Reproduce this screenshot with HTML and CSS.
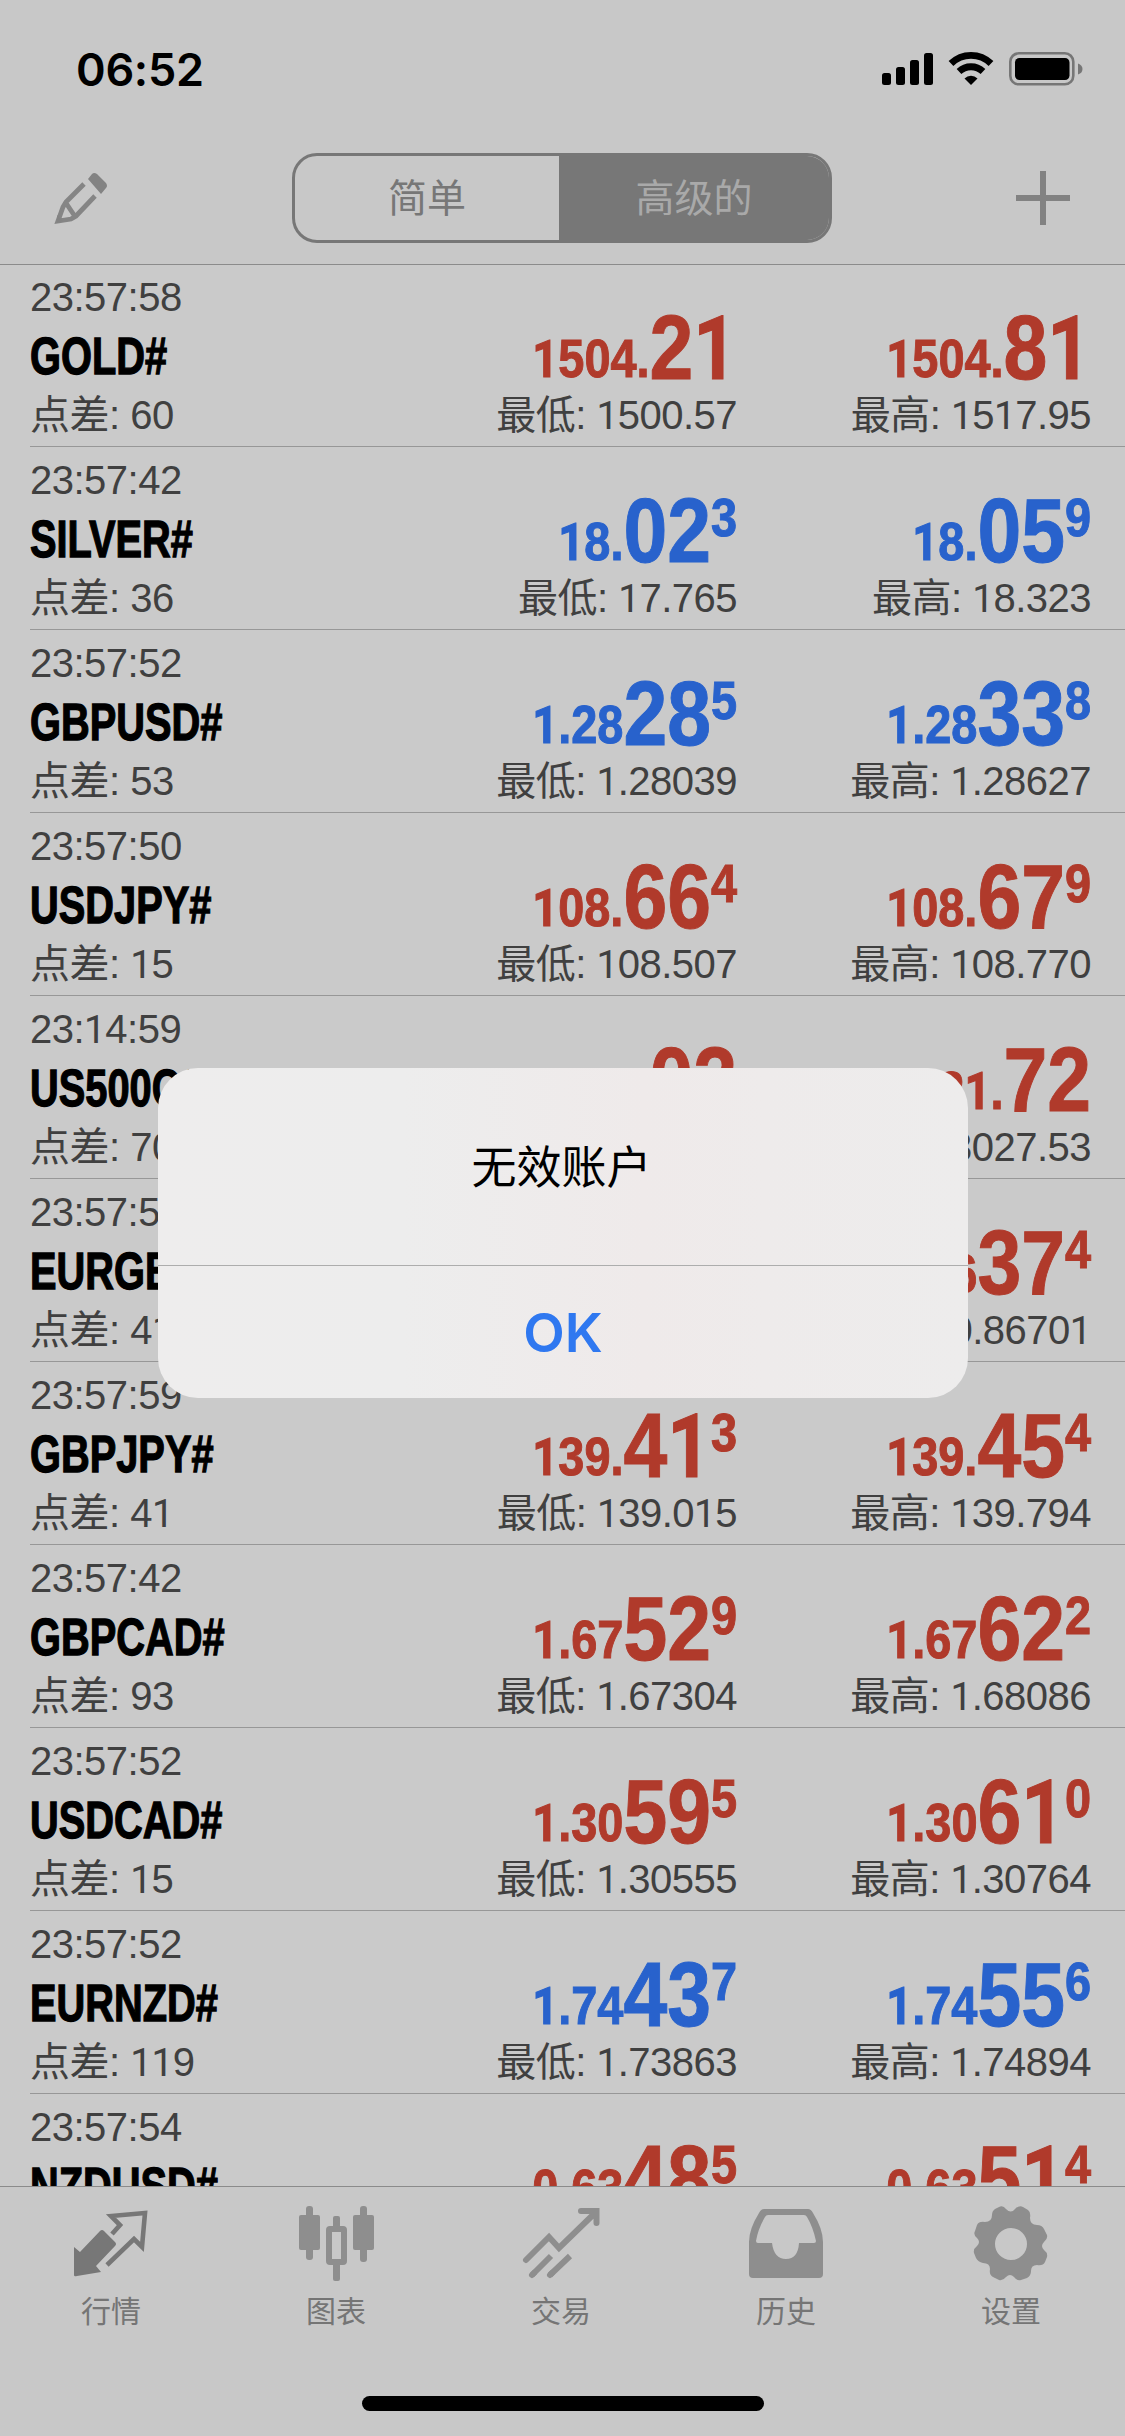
FILE: index.html
```
<!DOCTYPE html>
<html lang="zh-CN">
<head>
<meta charset="utf-8">
<title>行情</title>
<link rel="stylesheet" href="styles.css">
</head>
<body>
<div class="screen">
  <header class="top">
    <div class="status">
      <span class="clock">06:52</span>
      <svg class="status-icons" width="202" height="36" viewBox="0 0 202 36">
        <rect x="0" y="22" width="9" height="12" rx="2.5"/>
        <rect x="14" y="16" width="9" height="18" rx="2.5"/>
        <rect x="28" y="9" width="9" height="25" rx="2.5"/>
        <rect x="42" y="2" width="9" height="32" rx="2.5"/>
        <g fill="none" stroke="#000" stroke-width="6.8">
          <path d="M69 12.500 A28.500 28.500 0 0 1 109 12.500"/>
          <path d="M77 20.500 A17.500 17.500 0 0 1 101 20.500"/>
        </g>
        <path d="M89 34 L82.500 27.500 A9.200 9.200 0 0 1 95.500 27.500 Z"/>
        <rect x="128.300" y="2.300" width="63" height="31" rx="8.500" fill="none" stroke="#767676" stroke-width="2.600"/>
        <rect x="133" y="7" width="54.500" height="22" rx="4.500"/>
        <path d="M196 12.500 Q200.500 14 200.500 18 Q200.500 22 196 23.500 Z" fill="#767676"/>
      </svg>
    </div>
    <nav class="bar">
      <svg class="pencil" width="54" height="54" viewBox="0 0 54 54">
        <path d="M34 8 L38 3 Q40 1 43 3 L52 12 Q54 15 52 17 L47 23 Z" fill="#838383"/>
        <path d="M30 13 L12 31 L9 36 L4 50 L17 48 L22 45 L41 25 M12 32 L20 44" fill="none" stroke="#858585" stroke-width="4.800"/>
        <path d="M3 52 V44 L9 50 Z" fill="#838383"/>
      </svg>
      <div class="segments">
        <span class="segment">简单</span>
        <span class="segment segment-on">高级的</span>
      </div>
      <svg class="plus" width="54" height="54" viewBox="0 0 54 54"><path d="M27 0V54M0 27H54" stroke="#828282" stroke-width="6"/></svg>
    </nav>
  </header>
  <main class="quotes" id="quotes"></main>
  <footer class="tabs">
    <div class="tab">
      <svg width="80" height="80" viewBox="0 0 80 80">
        <path d="M3 70 V42 L9 47 L29 26 Q31 24 33 26 L44 37 Q46 39 44 41 L25 61 L30 67 L6 71 Q3 72 3 70 Z" fill="#777"/>
        <path d="M41 29 L49 20 L40 11 L74 8 L71 42 L63 34 L36 60" fill="none" stroke="#777" stroke-width="4.600"/>
      </svg>
      <span>行情</span>
    </div>
    <div class="tab">
      <svg width="80" height="80" viewBox="0 0 80 80" fill="#8e8e8e">
        <rect x="10" y="1" width="7" height="54" rx="3"/><rect x="3" y="10" width="21" height="35" rx="2"/>
        <rect x="64" y="1" width="7" height="56" rx="3"/><rect x="57" y="10" width="21" height="35" rx="2"/>
        <rect x="37" y="11" width="7" height="14" rx="2"/><rect x="37" y="56" width="7" height="20" rx="2"/>
        <rect x="33" y="24" width="15" height="33" rx="1" fill="none" stroke="#8e8e8e" stroke-width="6"/>
      </svg>
      <span>图表</span>
    </div>
    <div class="tab">
      <svg width="80" height="80" viewBox="0 0 80 80" fill="none" stroke="#8e8e8e" stroke-width="6">
        <path stroke-linecap="round" d="M5 55 L28 32 L38 43 L75 7 M60 6 H75.500 V18"/>
        <path stroke-linecap="round" d="M11 70 L13 68 M29 70 L31 68"/>
        <path d="M11 70 L30 51 M29 70 L49 51"/>
      </svg>
      <span>交易</span>
    </div>
    <div class="tab">
      <svg width="80" height="80" viewBox="0 0 80 80">
        <path fill="#8e8e8e" fill-rule="evenodd" d="M18 4 H62 Q65 4 67 8 Q77 24 77 37 V69 Q77 73 73 73 H7 Q3 73 3 69 V37 Q3 24 13 8 Q15 4 18 4 Z M22 10 Q20 10 19 12 Q12 24 10 36 Q10 38 12 38 H26 Q28 54 40 54 Q52 54 53 38 H68 Q70 38 70 36 Q67 22 61 12 Q60 10 58 10 Z"/>
      </svg>
      <span>历史</span>
    </div>
    <div class="tab">
      <svg width="80" height="80" viewBox="0 0 80 80">
        <path fill="#8e8e8e" fill-rule="evenodd" d="M28 2 Q32 0 35 4 Q40 9 44 4 Q48 0 52 2 L57 5 Q60 7 59 13 Q59 20 66 20 Q71 20 73 24 L76 30 Q77 34 73 37 Q69 41 73 45 Q77 48 76 52 L74 57 Q72 61 66 60 Q60 60 60 66 Q60 71 56 73 L50 75 Q46 76 43 72 Q39 68 35 72 Q32 76 28 75 L22 72 Q18 70 19 64 Q19 58 12 58 Q7 57 5 53 L3 48 Q2 44 6 41 Q10 37 6 33 Q2 30 4 26 L6 20 Q8 16 14 17 Q21 17 21 10 Q21 6 24 4 Z M40 23 A16 16 0 1 0 40 55 A16 16 0 1 0 40 23 Z"/>
      </svg>
      <span>设置</span>
    </div>
  </footer>
  <div class="home-bar"></div>
  <section class="alert" role="alertdialog">
    <p class="alert-text">无效账户</p>
    <button class="alert-ok">OK</button>
  </section>
</div>
<script src="quotes.js"></script>
</body>
</html>
```
FILE: styles.css
```
* { box-sizing: border-box; }
body { margin: 0; }
.screen {
  position: relative;
  display: flex;
  flex-direction: column;
  width: 1125px;
  height: 2436px;
  overflow: hidden;
  background: #cacaca;
  font-family: "Liberation Sans", "Noto Sans CJK SC", sans-serif;
}
.top {
  flex: none;
  height: 264px;
  background: #c8c8c8;
  box-shadow: 0 1px 0 #8b8b8b;
  z-index: 1;
}
.status {
  display: flex;
  justify-content: space-between;
  align-items: center;
  height: 138px;
  padding: 0 41px 0 76px;
}
.clock {
  font: 600 45px "Inter", sans-serif;
  letter-spacing: -0.3px;
}
.bar {
  display: flex;
  justify-content: space-between;
  align-items: center;
  height: 120px;
  padding: 0 55px 0 54px;
}
.segments {
  display: flex;
  width: 540px;
  height: 90px;
  border: 3px solid #777;
  border-radius: 25px;
  overflow: hidden;
}
.segment {
  width: 264px;
  color: #777;
  font-size: 39px;
  line-height: 86px;
  text-align: center;
}
.segment-on {
  flex: 1;
  background: #777;
  color: #a9a9a9;
}
.quotes { flex: 1; min-height: 0; overflow: hidden; }
.quote {
  display: grid;
  grid-template-columns: 1fr 354px 354px;
  height: 183px;
  margin-left: 30px;
  padding: 5px 34px 0 0;
  border-bottom: 1px solid #979797;
}
.time, .note {
  color: #404040;
  font-size: 40px;
  letter-spacing: -0.5px;
  white-space: nowrap;
}
.time { line-height: 57px; height: 56px; }
.note { line-height: 56px; }
/* A numeral one with no foot, in the same cell width as the other digits */
.one {
  font-family: "Roboto", sans-serif;
  font-size: .967em;
  line-height: 0;
}
.symbol {
  font-size: 52.5px;
  font-weight: bold;
  line-height: 62px;
  white-space: nowrap;
  transform: scaleX(.758);
  transform-origin: left;
  -webkit-text-stroke: 1.3px;
}
.side { text-align: right; }
.price {
  height: 118px;
  padding-top: 37px;
  font-size: 91.5px;
  font-weight: bold;
  line-height: 82px;
  white-space: nowrap;
  transform: scaleX(.86);
  transform-origin: right;
  -webkit-text-stroke: 1px;
}
.small, .pip { font-size: 54.5px; line-height: 0; }
.small { vertical-align: 2px; }
.pip { vertical-align: 26px; }
.down { color: #b03a2b; }
.up { color: #2862cc; }
.tabs {
  flex: none;
  display: flex;
  height: 210px;
  border-top: 1px solid #8b8b8b;
  background: #c8c8c8;
}
.tab {
  flex: 1;
  display: flex;
  flex-direction: column;
  align-items: center;
  padding: 18px 3px 0 0;
  color: #757575;
  font-size: 30px;
  line-height: 40px;
}
.tab svg { margin-bottom: 7px; }
.home-bar {
  flex: none;
  height: 40px;
  background: #c8c8c8;
}
.home-bar::before {
  content: "";
  display: block;
  width: 402px;
  height: 15px;
  margin: 0 auto;
  border-radius: 8px;
  background: #000;
}
.alert {
  position: absolute;
  left: 158px;
  top: 1068px;
  z-index: 2;
  display: flex;
  flex-direction: column;
  width: 810px;
  height: 330px;
  border-radius: 40px;
  background: linear-gradient(90deg, #eeeded, #ededed 30%, #efeaea 60%, #eeebeb 75%, #edecec);
}
.alert-text {
  height: 197px;
  margin: 0;
  padding-right: 3px;
  font-size: 45px;
  line-height: 202px;
  text-align: center;
}
.alert-ok {
  flex: 1;
  padding: 0;
  border: 0;
  border-top: 1px solid #adadad;
  background: none;
  color: #2f78f0;
  font: 600 54px "Inter", sans-serif;
}
```
FILE: quotes.js
```
// symbol, time, spread, direction, [bid small, big, pip], low, [ask small, big, pip], high
const quotes = [
  ["GOLD#", "23:57:58", "60", "down", ["1504.", "21", ""], "1500.57", ["1504.", "81", ""], "1517.95"],
  ["SILVER#", "23:57:42", "36", "up", ["18.", "02", "3"], "17.765", ["18.", "05", "9"], "18.323"],
  ["GBPUSD#", "23:57:52", "53", "up", ["1.28", "28", "5"], "1.28039", ["1.28", "33", "8"], "1.28627"],
  ["USDJPY#", "23:57:50", "15", "down", ["108.", "66", "4"], "108.507", ["108.", "67", "9"], "108.770"],
  ["US500C#", "23:14:59", "70", "down", ["3021.", "02", ""], "3001.03", ["3021.", "72", ""], "3027.53"],
  ["EURGBP#", "23:57:59", "41", "down", ["0.86", "33", "3"], "0.86301", ["0.86", "37", "4"], "0.86701"],
  ["GBPJPY#", "23:57:59", "41", "down", ["139.", "41", "3"], "139.015", ["139.", "45", "4"], "139.794"],
  ["GBPCAD#", "23:57:42", "93", "down", ["1.67", "52", "9"], "1.67304", ["1.67", "62", "2"], "1.68086"],
  ["USDCAD#", "23:57:52", "15", "down", ["1.30", "59", "5"], "1.30555", ["1.30", "61", "0"], "1.30764"],
  ["EURNZD#", "23:57:52", "119", "up", ["1.74", "43", "7"], "1.73863", ["1.74", "55", "6"], "1.74894"],
  ["NZDUSD#", "23:57:54", "29", "down", ["0.63", "48", "5"], "0.63301", ["0.63", "51", "4"], "0.63701"]
];

const digits = text => text.replace(/1/g, '<span class="one">1</span>');

const side = (price, direction, label, value) => `
  <div class="side">
    <div class="price ${direction}"><span class="small">${digits(price[0])}</span>${digits(price[1])}<span class="pip">${digits(price[2])}</span></div>
    <div class="note">${label}: ${digits(value)}</div>
  </div>`;

document.getElementById("quotes").innerHTML = quotes.map(
  ([symbol, time, spread, direction, bid, low, ask, high]) => `
  <article class="quote">
    <div>
      <div class="time">${digits(time)}</div>
      <div class="symbol">${symbol}</div>
      <div class="note">点差: ${digits(spread)}</div>
    </div>
    ${side(bid, direction, "最低", low)}
    ${side(ask, direction, "最高", high)}
  </article>`
).join("");
```
